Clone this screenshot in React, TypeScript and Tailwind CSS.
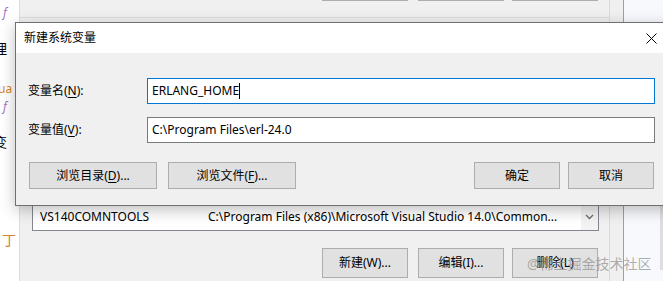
import type { ReactNode } from "react";

function WinButton({
  children,
  className = "",
}: {
  children: ReactNode;
  className?: string;
}) {
  return (
    <div
      className={`flex shrink-0 items-center justify-center border border-[#adadad] bg-[#e1e1e1] text-[12px] text-black ${className}`}
    >
      {children}
    </div>
  );
}

function Key({ children }: { children: ReactNode }) {
  return <span className="underline underline-offset-[2px]">{children}</span>;
}

function CloseIcon() {
  return (
    <svg width="11" height="11" viewBox="0 0 11 11" aria-hidden="true">
      <path d="M0.5 0.5 L10.5 10.5 M10.5 0.5 L0.5 10.5" stroke="#000" strokeWidth="1" fill="none" />
    </svg>
  );
}

function ChevronDown() {
  return (
    <svg width="9" height="6" viewBox="0 0 9 6" aria-hidden="true">
      <path d="M1 1 L4.5 4.5 L8 1" stroke="#6a6a6a" strokeWidth="1.3" fill="none" />
    </svg>
  );
}

export default function App() {
  return (
    <div className="relative h-[281px] w-[663px] overflow-hidden bg-[#f0f0f0] font-['Noto_Sans','Noto_Sans_CJK_SC',sans-serif] text-[12px] text-black">
      <div className="flex h-full">
        {/* editor fragments peeking out on the left */}
        <div className="flex w-[20px] shrink-0 flex-col overflow-hidden border-r border-[#dcdcdc] bg-white">
          <div className="ml-[3px] mt-[7px] text-[12px] italic leading-[12px] text-[#a874c6]">f</div>
          <div className="-ml-[7px] mt-[23px] text-[14px] leading-[14px]">理</div>
          <div className="-ml-[2px] mt-[27px] text-[12px] leading-[12px] text-[#d9822b]">ua</div>
          <div className="ml-[3px] mt-[6px] text-[12px] italic leading-[12px] text-[#a874c6]">f</div>
          <div className="-ml-[6px] mt-[23px] text-[13px] leading-[13px]">变</div>
          <div className="ml-[2px] mt-[84px] text-[14px] leading-[14px] text-[#d9822b]">丁</div>
        </div>

        {/* environment variables window behind the dialog */}
        <div className="flex w-[590px] shrink-0 flex-col border-r border-[#dadada]">
          <div className="flex h-[18px] border-b border-[#dcdcdc]">
            <div className="ml-[302px] flex gap-[10px]">
              <div className="h-px w-[86px] bg-[#adadad]" />
              <div className="h-px w-[86px] bg-[#adadad]" />
            </div>
            <div className="ml-[8px] h-px w-[86px] bg-[#adadad]" />
          </div>

          <div className="ml-[12px] mt-[186px] flex h-[27px] w-[567px] border-x border-b border-[#828790] bg-white">
            <div className="flex w-[175px] shrink-0 items-center pl-[7px]">VS140COMNTOOLS</div>
            <div className="flex w-[373px] shrink-0 items-center overflow-hidden whitespace-nowrap">
              C:\Program Files (x86)\Microsoft Visual Studio 14.0\Common...
            </div>
            <div className="flex flex-1 items-center justify-center bg-[#f3f3f3]">
              <ChevronDown />
            </div>
          </div>

          <div className="ml-[302px] mt-[17px] flex">
            <WinButton className="h-[30px] w-[86px]">新建(W)...</WinButton>
            <WinButton className="ml-[10px] h-[30px] w-[86px]">编辑(I)...</WinButton>
            <WinButton className="ml-[8px] h-[30px] w-[86px]">删除(L)</WinButton>
          </div>
        </div>

        <div className="w-[14px] shrink-0 border-r border-[#a0a0a0]" />

        <div className="flex flex-1 bg-[#f7f9fc]">
          <div className="ml-auto mt-[205px] h-[65px] w-[3px] bg-[#dedede]" />
        </div>
      </div>

      {/* 新建系统变量 dialog */}
      <div className="absolute left-[15px] top-[22px] w-[660px] border border-[#707070] bg-[#f0f0f0] shadow-[0_4px_14px_rgba(0,0,0,0.25)]">
        <div className="flex h-[30px] items-center bg-white">
          <div className="pl-[8px] text-[12px]">新建系统变量</div>
          <div className="ml-auto flex h-full w-[46px] items-center justify-center">
            <CloseIcon />
          </div>
        </div>

        <div className="pb-[16px] pl-[12px] pt-[25px]">
          <div className="flex h-[26px] items-center">
            <div className="w-[119px] shrink-0">
              变量名(<Key>N</Key>):
            </div>
            <div className="flex h-[26px] w-[508px] items-center border border-[#0078d7] bg-white pl-[4px]">
              <span>ERLANG_HOME</span>
              <span className="h-[16px] w-px bg-black" />
            </div>
          </div>

          <div className="mt-[13px] flex h-[26px] items-center">
            <div className="w-[119px] shrink-0">
              变量值(<Key>V</Key>):
            </div>
            <div className="flex h-[26px] w-[508px] items-center border border-[#7a7a7a] bg-white pl-[4px]">
              C:\Program Files\erl-24.0
            </div>
          </div>

          <div className="mt-[19px] flex w-[626px] items-center justify-between">
            <div className="ml-[1px] flex gap-[11px]">
              <WinButton className="h-[27px] w-[128px]">
                浏览目录(<Key>D</Key>)...
              </WinButton>
              <WinButton className="h-[27px] w-[128px]">
                浏览文件(<Key>F</Key>)...
              </WinButton>
            </div>
            <div className="flex gap-[8px]">
              <WinButton className="h-[27px] w-[86px]">确定</WinButton>
              <WinButton className="h-[27px] w-[86px]">取消</WinButton>
            </div>
          </div>
        </div>
      </div>

      {/* watermark */}
      <div className="pointer-events-none absolute left-[527px] top-[254px] text-[14px] leading-[20px] text-[#8c8c8c]/70">
        @稀土掘金技术社区
      </div>
    </div>
  );
}
